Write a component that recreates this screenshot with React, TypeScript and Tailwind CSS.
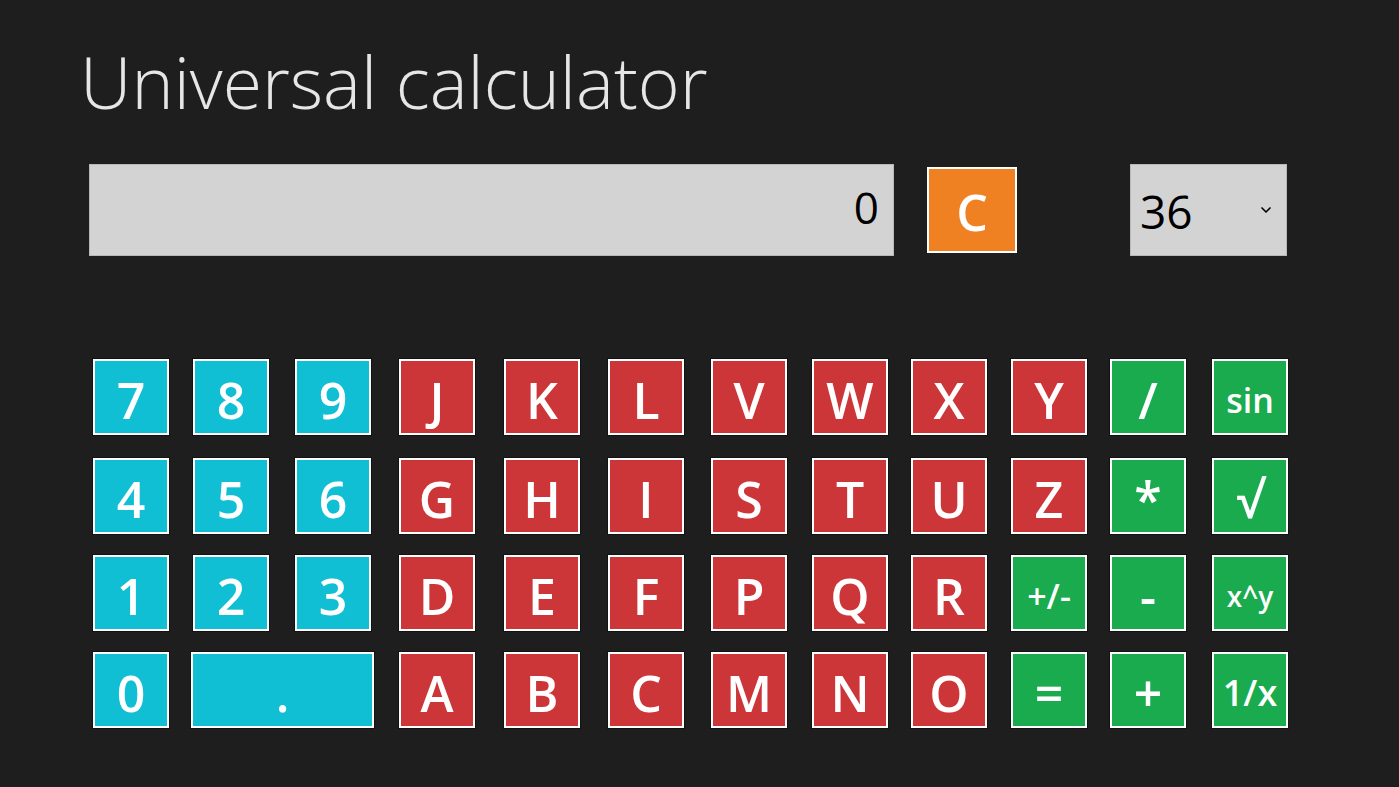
import { ChevronDown } from "lucide-react";

type Key = { label: string; kind: "num" | "hex" | "op"; size?: string; span?: boolean };

const rows: Key[][] = [
  [
    { label: "7", kind: "num" },
    { label: "8", kind: "num" },
    { label: "9", kind: "num" },
    { label: "J", kind: "hex" },
    { label: "K", kind: "hex" },
    { label: "L", kind: "hex" },
    { label: "V", kind: "hex" },
    { label: "W", kind: "hex" },
    { label: "X", kind: "hex" },
    { label: "Y", kind: "hex" },
    { label: "/", kind: "op" },
    { label: "sin", kind: "op", size: "text-[34px]" },
  ],
  [
    { label: "4", kind: "num" },
    { label: "5", kind: "num" },
    { label: "6", kind: "num" },
    { label: "G", kind: "hex" },
    { label: "H", kind: "hex" },
    { label: "I", kind: "hex" },
    { label: "S", kind: "hex" },
    { label: "T", kind: "hex" },
    { label: "U", kind: "hex" },
    { label: "Z", kind: "hex" },
    { label: "*", kind: "op" },
    { label: "√", kind: "op" },
  ],
  [
    { label: "1", kind: "num" },
    { label: "2", kind: "num" },
    { label: "3", kind: "num" },
    { label: "D", kind: "hex" },
    { label: "E", kind: "hex" },
    { label: "F", kind: "hex" },
    { label: "P", kind: "hex" },
    { label: "Q", kind: "hex" },
    { label: "R", kind: "hex" },
    { label: "+/-", kind: "op", size: "text-[34px]" },
    { label: "-", kind: "op" },
    { label: "x^y", kind: "op", size: "text-[28px]" },
  ],
  [
    { label: "0", kind: "num" },
    { label: ".", kind: "num", span: true },
    { label: "A", kind: "hex" },
    { label: "B", kind: "hex" },
    { label: "C", kind: "hex" },
    { label: "M", kind: "hex" },
    { label: "N", kind: "hex" },
    { label: "O", kind: "hex" },
    { label: "=", kind: "op" },
    { label: "+", kind: "op" },
    { label: "1/x", kind: "op", size: "text-[36px]" },
  ],
];

const bg = {
  num: "bg-[#10bfd3]",
  hex: "bg-[#cc3639]",
  op: "bg-[#1aab4f]",
};

function KeyButton({ k }: { k: Key }) {
  return (
    <button
      type="button"
      className={`${bg[k.kind]} ${k.span ? "col-span-2 w-[183px] -ml-[2px]" : "w-[76px]"} h-[76px] border-2 border-white shadow-[0_0_0_1px_rgba(0,0,0,0.4)] flex items-center justify-center pt-[6px] text-white font-semibold leading-none ${k.size ?? "text-[50px]"}`}
    >
      {k.label}
    </button>
  );
}

export default function App() {
  return (
    <div
      className="w-[1399px] h-[787px] bg-[#1e1e1e] overflow-hidden"
      style={{ fontFamily: '"Open Sans", "Noto Sans", sans-serif' }}
    >
      {/* Header */}
      <h1 className="pl-[80px] pt-[46px] text-[71.5px] font-light leading-none text-[#e6e6e6]">
        Universal calculator
      </h1>

      {/* Display row */}
      <div className="flex items-start pl-[89px] mt-[46px]">
        <div className="w-[805px] h-[92px] bg-[#d3d3d3] border border-[#b8b8b8] flex items-center justify-end pr-[14px] pb-[6px] text-[44px] text-black">
          0
        </div>
        <button
          type="button"
          className="ml-[33px] mt-[3px] w-[90px] h-[86px] bg-[#f08122] border-2 border-white flex items-center justify-center pt-[4px] text-white text-[50px] font-semibold leading-none"
        >
          C
        </button>
        <div className="ml-[113px] w-[157px] h-[92px] bg-[#d3d3d3] border border-[#b8b8b8] flex items-center justify-between pl-[9px] pr-[12px] text-black">
          <span className="text-[46px] pt-[4px]">36</span>
          <ChevronDown size={16} strokeWidth={2.5} />
        </div>
      </div>

      {/* Keypad */}
      <div className="grid grid-cols-[100px_102px_104px_105px_104px_103px_101px_99px_100px_99px_102px_76px] grid-rows-[99px_97px_97px_76px] ml-[93px] mt-[103px] w-fit">
        {rows.map((row, ri) =>
          row.map((k) => <KeyButton key={`${ri}-${k.label}`} k={k} />)
        )}
      </div>
    </div>
  );
}
